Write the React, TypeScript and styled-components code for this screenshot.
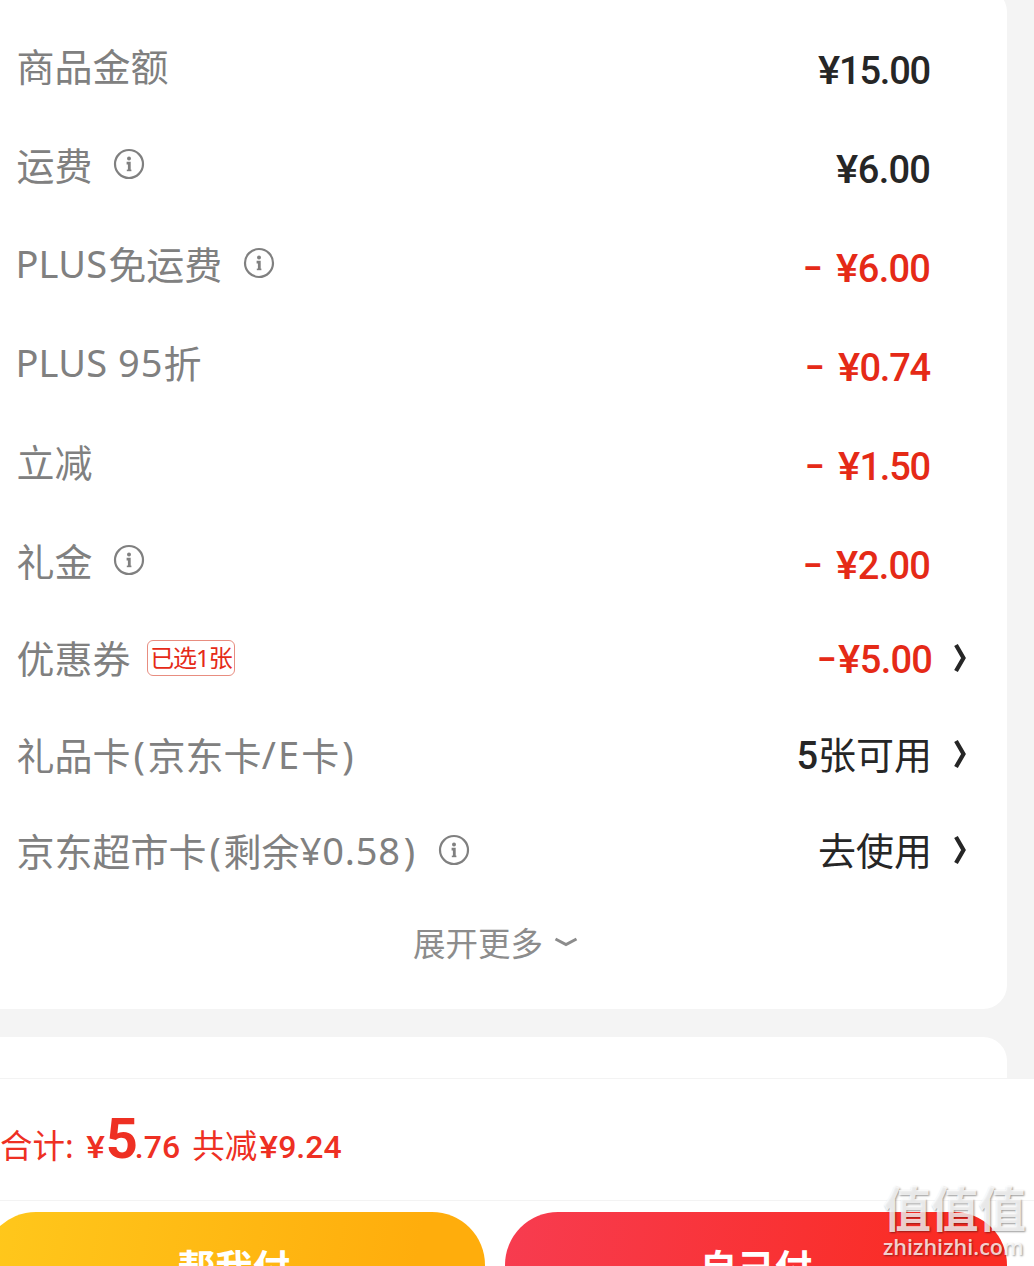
import React from "react";
import styled, { createGlobalStyle } from "styled-components";

const GlobalStyle = createGlobalStyle`
  * {
    box-sizing: border-box;
  }
  body {
    margin: 0;
    background: #f4f4f4;
    overflow: hidden;
  }
`;
const PageContainer = styled.div`
  position: relative;
  display: flex;
  flex-direction: column;
  width: 1034px;
  height: 1266px;
  overflow: hidden;
  font-family: "Noto Sans", "Noto Sans CJK SC", sans-serif;
`;
const PriceCard = styled.div`
  flex: none;
  width: 1007px;
  height: 1021px;
  margin-top: -12px;
  padding: 30px 0 0 16.6px;
  border-radius: 0 24px 24px 0;
  background: #fff;
`;
const NextCard = styled.div`
  flex: none;
  width: 1007px;
  height: 41px;
  margin-top: 28px;
  border-radius: 0 24px 0 0;
  background: #fff;
`;
const Row = styled.div<{ $height: number }>`
  display: flex;
  align-items: center;
  justify-content: space-between;
  height: ${(props) => props.$height}px;
`;
const LabelGroup = styled.div`
  display: flex;
  align-items: center;
`;
const Label = styled.span`
  padding-bottom: 4px;
  color: #808080;
  font-size: 38px;
  line-height: 50px;
  white-space: pre;
`;
const Wide = styled.span<{ $spacing: number }>`
  letter-spacing: ${(props) => props.$spacing}px;
  vertical-align: 1px;
`;
const Latin = styled.span`
  margin-left: -1.2px;
  margin-right: 0.8px;
  letter-spacing: 0.2px;
  vertical-align: 1px;
`;
const Paren = styled.span<{ $side: "left" | "right" }>`
  display: inline-block;
  width: 17px;
  padding: 0 3px;
  text-align: ${(props) => props.$side};
  vertical-align: 1px;
`;
const InfoSvg = styled.svg`
  width: 32px;
  height: 32px;
  margin: -5px 0 0 20.6px;
`;
const SelectedTag = styled.span`
  display: flex;
  align-items: center;
  justify-content: center;
  width: 88px;
  height: 36px;
  margin: -4px 0 0 16.4px;
  padding-bottom: 3px;
  border: 1px solid #e88d80;
  border-radius: 6px;
  color: #e52a17;
  font-size: 24px;
  letter-spacing: -1px;
  white-space: nowrap;
`;
const ValueGroup = styled.div<{ $arrow?: boolean }>`
  display: flex;
  align-items: center;
  padding-top: ${(props) => (props.$arrow ? 0 : 7)}px;
  margin-right: ${(props) => (props.$arrow ? 40 : 77)}px;
`;
const Price = styled.span<{ $red?: boolean; $spacing?: number }>`
  margin-top: ${(props) => (props.$red ? -1 : 0)}px;
  color: ${(props) => (props.$red ? "#e52a17" : "#262626")};
  font-family: Roboto, "Noto Sans CJK SC", sans-serif;
  font-size: 38px;
  font-weight: 500;
  line-height: 50px;
  letter-spacing: ${(props) => props.$spacing || 0}px;
`;
const Yen = styled.span`
  display: inline-block;
  transform: scaleX(1.1);
  transform-origin: right center;
`;
const Minus = styled(Price)<{ $gap: number }>`
  display: inline-block;
  width: 16px;
  margin-top: -4px;
  margin-right: ${(props) => props.$gap}px;
  text-align: center;
  transform: scaleX(1.5);
`;
const ActionText = styled.span`
  padding-bottom: 4px;
  color: #262626;
  font-size: 38px;
  line-height: 50px;
`;
const ArrowSvg = styled.svg`
  width: 14px;
  height: 30px;
  margin: -4px 0 0 21px;
`;
const ExpandMore = styled.div`
  display: flex;
  align-items: center;
  margin: 21px 0 0 396.4px;
  color: #8c8c8c;
  font-size: 32.5px;
  line-height: 46px;
`;
const ExpandSvg = styled.svg`
  width: 24px;
  height: 12px;
  margin: -4px 0 0 11px;
`;
const Footer = styled.div`
  flex: none;
  width: 1034px;
  height: 188px;
  background: #fff;
  border-top: 1px solid #f3f3f3;
`;
const TotalBar = styled.div`
  display: flex;
  align-items: baseline;
  height: 122px;
  padding-top: 24px;
  border-bottom: 1px solid #f3f3f3;
  color: #ee3023;
  font-size: 32.5px;
  line-height: 72px;
`;
const TotalLabel = styled.span<{ $left?: number }>`
  margin-left: ${(props) => props.$left || 0}px;
`;
const Amount = styled.span<{ $size: number; $left?: number; $bold?: boolean }>`
  margin-left: ${(props) => props.$left || 0}px;
  font-family: Roboto, sans-serif;
  font-size: ${(props) => props.$size}px;
  font-weight: ${(props) => (props.$bold ? 700 : 500)};
`;
const ButtonBar = styled.div`
  display: flex;
  gap: 20px;
  margin: 11px 0 0 -17px;
`;
const PayButton = styled.button<{ $from: string; $to: string }>`
  flex: none;
  width: 502px;
  height: 106px;
  padding: 0;
  border: none;
  border-radius: 53px;
  background: linear-gradient(100deg, ${(props) => props.$from}, ${(props) => props.$to} 85%);
  color: #fff;
  font-family: "Noto Sans CJK SC", sans-serif;
  font-size: 37.5px;
  font-weight: 700;
`;
const Watermark = styled.div`
  position: absolute;
  top: 1177px;
  left: 883px;
  display: flex;
  flex-direction: column;
  color: rgba(255, 255, 255, 0.8);
  text-shadow: 1px 1px 2px rgba(0, 0, 0, 0.4);
`;
const WatermarkName = styled.span`
  font-family: "Noto Sans CJK SC", sans-serif;
  font-size: 48px;
  font-weight: 700;
  line-height: 58px;
  letter-spacing: -0.5px;
`;
const WatermarkSite = styled.span`
  font-family: "Open Sans", sans-serif;
  font-size: 21.6px;
  font-weight: 600;
  line-height: 24px;
`;

const InfoIcon: React.FC = () => (
  <InfoSvg viewBox="0 0 32 32" fill="none" stroke="#808080">
    <circle cx="16" cy="16" r="14" strokeWidth="2.2" />
    <circle cx="16" cy="10.5" r="2" fill="#808080" stroke="none" />
    <path d="M13.6 15.2H16.3V22.4" strokeWidth="2.8" />
    <path d="M13.8 22.4H18.4" strokeWidth="1.6" />
  </InfoSvg>
);

const ArrowIcon: React.FC = () => (
  <ArrowSvg viewBox="0 0 14 30" fill="none" stroke="#262626">
    <path d="M3 2L10.5 15L3 28" strokeWidth="4.2" />
  </ArrowSvg>
);

interface Item {
  label: React.ReactNode;
  info?: boolean;
  minus?: boolean;
  price: string;
  priceSpacing?: number;
}

const items: Item[] = [
  { label: "商品金额", price: "15.00", priceSpacing: -1.2 },
  { label: "运费", info: true, price: "6.00", priceSpacing: -0.8 },
  { label: <><Latin>PLUS</Latin>免运费</>, info: true, minus: true, price: "6.00", priceSpacing: -0.8 },
  { label: <><Latin>PLUS</Latin> <Wide $spacing={1}>95</Wide>折</>, minus: true, price: "0.74", priceSpacing: -1.2 },
  { label: "立减", minus: true, price: "1.50", priceSpacing: -1.2 },
  { label: "礼金", info: true, minus: true, price: "2.00", priceSpacing: -0.8 },
];

const App: React.FC = () => {
  return (
    <PageContainer>
      <GlobalStyle />
      <PriceCard>
        {items.map((item, index) => (
          <Row key={index} $height={99}>
            <LabelGroup>
              <Label>{item.label}</Label>
              {item.info && <InfoIcon />}
            </LabelGroup>
            <ValueGroup>
              {item.minus && (
                <Minus $red $gap={17}>
                  -
                </Minus>
              )}
              <Price $red={item.minus} $spacing={item.priceSpacing}>
                <Yen>¥</Yen>
                {item.price}
              </Price>
            </ValueGroup>
          </Row>
        ))}
        <Row $height={96}>
          <LabelGroup>
            <Label>优惠券</Label>
            <SelectedTag>已选1张</SelectedTag>
          </LabelGroup>
          <ValueGroup $arrow>
            <Minus $red $gap={5}>
              -
            </Minus>
            <Price $red $spacing={-0.8}>
              <Yen>¥</Yen>
              5.00
            </Price>
            <ArrowIcon />
          </ValueGroup>
        </Row>
        <Row $height={96}>
          <LabelGroup>
            <Label>
              礼品卡<Paren $side="right">(</Paren>京东卡<Wide $spacing={2.2}>/E</Wide>卡<Paren $side="left">)</Paren>
            </Label>
          </LabelGroup>
          <ValueGroup $arrow>
            <Price>5</Price>
            <ActionText>张可用</ActionText>
            <ArrowIcon />
          </ValueGroup>
        </Row>
        <Row $height={96}>
          <LabelGroup>
            <Label>
              京东超市卡<Paren $side="right">(</Paren>剩余<Wide $spacing={0.8}>¥0.58</Wide><Paren $side="left">)</Paren>
            </Label>
            <InfoIcon />
          </LabelGroup>
          <ValueGroup $arrow>
            <ActionText>去使用</ActionText>
            <ArrowIcon />
          </ValueGroup>
        </Row>
        <ExpandMore>
          展开更多
          <ExpandSvg viewBox="0 0 24 12" fill="none" stroke="#8c8c8c">
            <path d="M1.5 3L12 8.5L22.5 3" strokeWidth="3" />
          </ExpandSvg>
        </ExpandMore>
      </PriceCard>
      <NextCard />
      <Footer>
        <TotalBar>
          <TotalLabel>合计:</TotalLabel>
          <Amount $size={32} $left={14}>
            <Yen>¥</Yen>
          </Amount>
          <Amount $size={56} $left={1} $bold>
            5
          </Amount>
          <Amount $size={32} $left={-3}>
            .76
          </Amount>
          <TotalLabel $left={12}>共减</TotalLabel>
          <Amount $size={32} $left={4}>
            <Yen>¥</Yen>9.24
          </Amount>
        </TotalBar>
        <ButtonBar>
          <PayButton $from="#ffc81c" $to="#ffad0c">
            帮我付
          </PayButton>
          <PayButton $from="#f73c50" $to="#fa2c24">
            自己付
          </PayButton>
        </ButtonBar>
      </Footer>
      <Watermark>
        <WatermarkName>值值值</WatermarkName>
        <WatermarkSite>zhizhizhi.com</WatermarkSite>
      </Watermark>
    </PageContainer>
  );
};
export default App;
